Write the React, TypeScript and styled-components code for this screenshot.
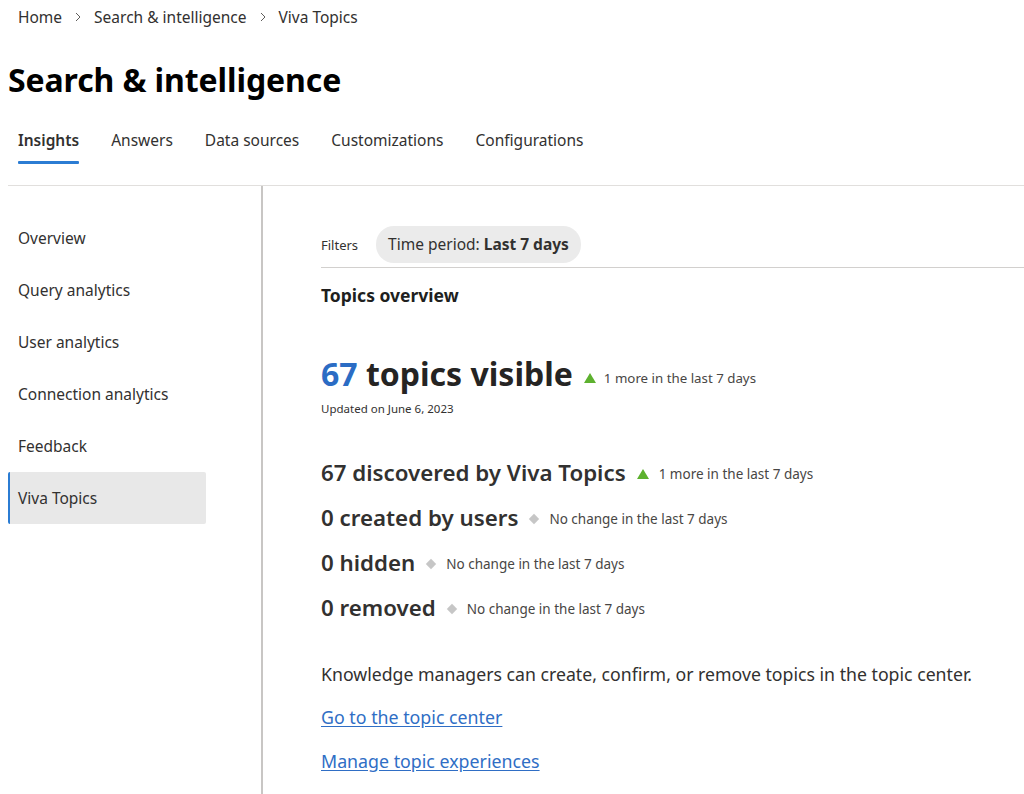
import React from "react";
import styled, { createGlobalStyle } from "styled-components";

const GlobalStyle = createGlobalStyle`
  html, body {
    margin: 0;
    padding: 0;
    background: #fff;
  }
  body {
    font-family: "Noto Sans", "Open Sans", Arial, sans-serif;
    color: #323130;
  }
`;

const TABS = ["Insights", "Answers", "Data sources", "Customizations", "Configurations"];
const NAV = ["Overview", "Query analytics", "User analytics", "Connection analytics", "Feedback", "Viva Topics"];

const STATS = [
  { label: "67 discovered by Viva Topics", change: "1 more in the last 7 days", up: true },
  { label: "0 created by users", change: "No change in the last 7 days", up: false },
  { label: "0 hidden", change: "No change in the last 7 days", up: false },
  { label: "0 removed", change: "No change in the last 7 days", up: false },
];

const UpArrow = () => (
  <svg width="14" height="12" viewBox="0 0 14 12">
    <path d="M7 1 L13 11 L1 11 Z" fill="#5db12f" />
  </svg>
);

const Diamond = () => (
  <svg width="12" height="12" viewBox="0 0 12 12">
    <path d="M6 0.8 L11.2 6 L6 11.2 L0.8 6 Z" fill="#c6c6c6" />
  </svg>
);

const Chevron = () => (
  <svg width="10" height="10" viewBox="0 0 10 10">
    <path d="M3 1 L7 5 L3 9" stroke="#605e5c" strokeWidth="1" fill="none" />
  </svg>
);

const App = () => {
  return (
    <Page>
      <GlobalStyle />
      <Breadcrumb>
        <span>Home</span>
        <Chevron />
        <span>Search &amp; intelligence</span>
        <Chevron />
        <span>Viva Topics</span>
      </Breadcrumb>
      <Title>Search &amp; intelligence</Title>
      <Tabs>
        {TABS.map((t, i) => (
          <Tab key={t} $active={i === 0}>
            {t}
          </Tab>
        ))}
      </Tabs>
      <Body>
        <Nav>
          {NAV.map((n) => (
            <NavItem key={n} $active={n === "Viva Topics"}>
              {n}
            </NavItem>
          ))}
        </Nav>
        <Content>
          <FilterRow>
            <FilterLabel>Filters</FilterLabel>
            <Pill>
              Time period: <b>Last 7 days</b>
            </Pill>
          </FilterRow>
          <SectionTitle>Topics overview</SectionTitle>
          <Headline>
            <BigNumber>67</BigNumber>&nbsp;topics visible
            <Change $big>
              <UpArrow />
              <span>1 more in the last 7 days</span>
            </Change>
          </Headline>
          <Updated>Updated on June 6, 2023</Updated>
          <StatList>
            {STATS.map((s) => (
              <StatRow key={s.label}>
                <StatLabel>{s.label}</StatLabel>
                <Change>
                  {s.up ? <UpArrow /> : <Diamond />}
                  <span>{s.change}</span>
                </Change>
              </StatRow>
            ))}
          </StatList>
          <Paragraph>
            Knowledge managers can create, confirm, or remove topics in the topic center.
          </Paragraph>
          <LinkRow href="#">Go to the topic center</LinkRow>
          <LinkRow href="#">Manage topic experiences</LinkRow>
        </Content>
      </Body>
    </Page>
  );
};

const Page = styled.div`
  width: 1024px;
  height: 794px;
  overflow: hidden;
  padding-left: 8px;
  box-sizing: border-box;
`;

const Breadcrumb = styled.div`
  height: 34px;
  display: flex;
  align-items: center;
  gap: 9px;
  padding-left: 10px;
  font-size: 15.5px;
  color: #323130;

  svg {
    margin: 0 2px;
  }
`;

const Title = styled.h1`
  margin: 0;
  margin-top: 24px;
  height: 44px;
  line-height: 44px;
  font-size: 32px;
  font-weight: 700;
  color: #000;
  letter-spacing: -0.1px;
`;

const Tabs = styled.div`
  display: flex;
  gap: 32px;
  padding-left: 10px;
  margin-top: 12px;
  height: 72px;
  border-bottom: 1px solid #e1dfdd;
  box-sizing: border-box;
  width: 1016px;
`;

const Tab = styled.div<{ $active?: boolean }>`
  position: relative;
  height: 50px;
  line-height: 52px;
  font-size: 15.5px;
  font-weight: ${(p) => (p.$active ? 600 : 400)};
  color: #323130;

  &::after {
    content: "";
    position: absolute;
    left: 0;
    right: 0;
    bottom: 0;
    height: 3px;
    border-radius: 1px;
    background: ${(p) => (p.$active ? "#2b7cd3" : "transparent")};
  }
`;

const Body = styled.div`
  display: grid;
  grid-template-columns: 255px 1fr;
  height: 608px;
`;

const Nav = styled.div`
  border-right: 2px solid #c8c6c4;
  padding-top: 26px;
  display: flex;
  flex-direction: column;
`;

const NavItem = styled.div<{ $active?: boolean }>`
  width: 198px;
  height: 52px;
  line-height: 52px;
  box-sizing: border-box;
  padding-left: 8px;
  font-size: 15.5px;
  color: #323130;
  border-radius: 2px;
  background: ${(p) => (p.$active ? "#e8e8e8" : "transparent")};
  border-left: 2px solid ${(p) => (p.$active ? "#2b7cd3" : "transparent")};
`;

const Content = styled.div`
  padding-left: 58px;
  display: flex;
  flex-direction: column;
  align-items: flex-start;
`;

const FilterRow = styled.div`
  margin-top: 40px;
  display: flex;
  align-items: center;
  gap: 18px;
  align-self: stretch;
  padding-bottom: 4px;
  border-bottom: 1px solid #d2d0ce;
`;

const FilterLabel = styled.span`
  font-size: 13px;
  color: #323130;
`;

const Pill = styled.div`
  height: 37px;
  line-height: 37px;
  padding: 0 12px;
  border-radius: 18px;
  background: #ebebeb;
  font-size: 15.5px;
  color: #323130;

  b {
    font-weight: 700;
  }
`;

const SectionTitle = styled.div`
  margin-top: 15px;
  line-height: 24px;
  font-size: 17.5px;
  font-weight: 700;
  color: #201f1e;
`;

const Headline = styled.div`
  margin-top: 44px;
  display: flex;
  align-items: center;
  height: 44px;
  font-size: 32px;
  font-weight: 700;
  color: #252423;
`;

const BigNumber = styled.span`
  color: #2b6cc4;
`;

const Change = styled.span<{ $big?: boolean }>`
  display: inline-flex;
  align-items: center;
  gap: ${(p) => (p.$big ? "7px" : "9px")};
  margin-left: 10px;
  margin-top: ${(p) => (p.$big ? "10px" : "4px")};
  font-size: ${(p) => (p.$big ? "13.3px" : "13.5px")};
  font-weight: 400;
  color: #484644;
`;

const Updated = styled.div`
  margin-top: 6px;
  line-height: 16px;
  font-size: 11.5px;
  color: #323130;
`;

const StatList = styled.div`
  margin-top: 39px;
  display: flex;
  flex-direction: column;
  gap: 13px;
`;

const StatRow = styled.div`
  display: flex;
  align-items: center;
  height: 32px;
`;

const StatLabel = styled.span`
  font-size: 22.3px;
  font-weight: 600;
  color: #323130;
`;

const Paragraph = styled.p`
  margin: 38px 0 0;
  line-height: 26px;
  font-size: 17.7px;
  color: #323130;
`;

const LinkRow = styled.a`
  margin-top: 17px;
  line-height: 26px;
  font-size: 17.8px;
  color: #2f6ec5;
  text-decoration: underline;
  text-underline-offset: 2px;

  & + & {
    margin-top: 18px;
  }
`;

export default App;
